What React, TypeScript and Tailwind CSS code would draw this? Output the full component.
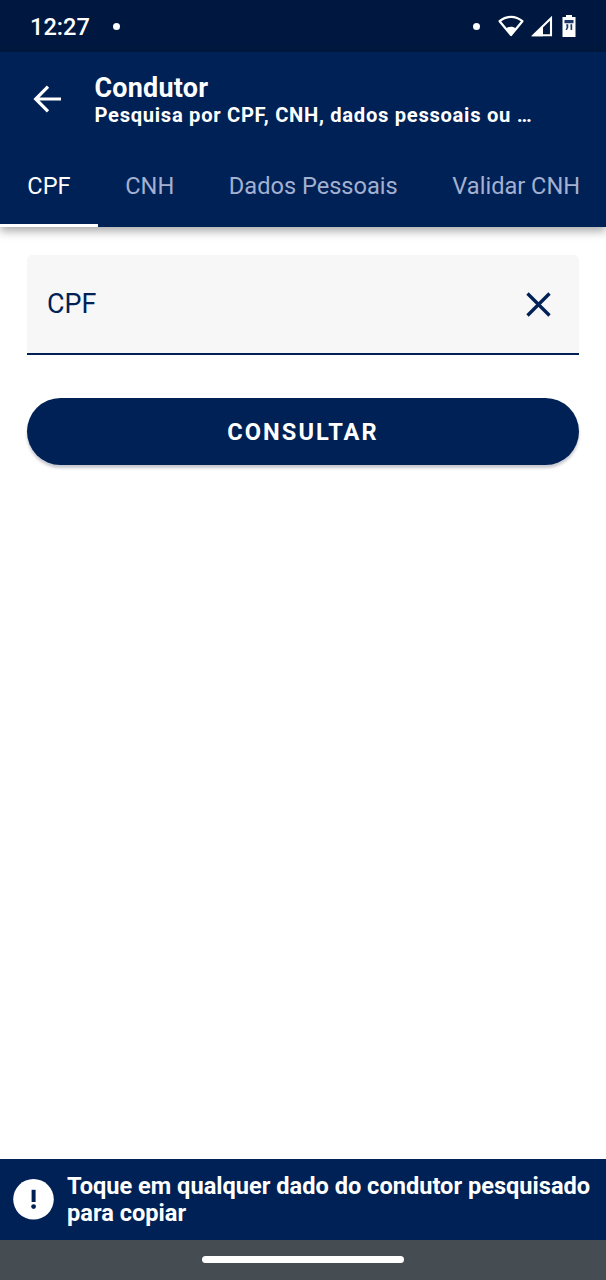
import type { ReactNode } from "react";

const TABS = ["CPF", "CNH", "Dados Pessoais", "Validar CNH"];

function StatusBar() {
  return (
    <div className="flex h-[52px] shrink-0 items-center bg-[#00183f] pl-[30px] pr-[29px] text-white">
      <span className="pt-[4px] text-[23.6px] font-medium leading-none">12:27</span>
      <span className="ml-[23px] size-[7px] rounded-full bg-white" />
      <span className="ml-auto mr-[18px] size-[7px] rounded-full bg-white" />
      <svg width="27" height="24" viewBox="0 0 27 24" fill="none">
        <path
          d="M1.6 7.2C8.4 1.3 17.6 1.3 24.4 7.2L13 21Z"
          stroke="white"
          strokeWidth="2.2"
          strokeLinejoin="round"
        />
        <path d="M8 14.6C11 12.2 15 12.2 18 14.6L13 21.8Z" fill="white" />
      </svg>
      <svg className="ml-[6px]" width="22" height="24" viewBox="0 0 22 24" fill="none">
        <path d="M2.5 21.3H20V4.2Z" stroke="white" strokeWidth="2.1" />
        <path d="M1 22.3L12 11.5V22.3Z" fill="white" />
      </svg>
      <svg className="ml-[9px]" width="15" height="24" viewBox="0 0 15 24" fill="none">
        <path d="M4 1H10V3H13.5V23H.5V3H4Z" fill="white" />
        <path
          d="M2.5 6H11.5V9.3H2.5ZM4.2 10.2H6.3V13.5L5 16H3.6L4.6 13.2ZM8.4 10.2H10.2V16H8.6Z"
          fill="#1d3766"
        />
      </svg>
    </div>
  );
}

function Tab({ active, children }: { active?: boolean; children: ReactNode }) {
  return (
    <button
      role="tab"
      aria-selected={active}
      className={`flex h-[81px] shrink-0 items-center whitespace-nowrap border-b-[3px] px-[27.3px] pt-[4px] text-[23.6px] leading-none ${
        active ? "border-white text-white" : "border-transparent text-[#a3b0cf]"
      }`}
    >
      {children}
    </button>
  );
}

function Header() {
  return (
    <header className="z-10 h-[175px] shrink-0 bg-[#002156] shadow-[0_4px_9px_rgba(0,0,0,0.35)]">
      <div className="flex h-[94px] items-center pl-[33px] text-white">
        <svg width="29" height="28" viewBox="0 0 29 28" fill="none" stroke="white" strokeWidth="3.2">
          <path d="M28 14H3M15 1.7L2.7 14L15 26.3" />
        </svg>
        <div className="ml-[32.5px] mt-[5px] font-bold">
          <h1 className="text-[26.9px] leading-[28px] tracking-[0.25px]">Condutor</h1>
          <p className="text-[20.2px] leading-[27px] tracking-[0.69px]">
            Pesquisa por CPF, CNH, dados pessoais ou …
          </p>
        </div>
      </div>
      <div role="tablist" className="flex overflow-hidden">
        {TABS.map((t, i) => (
          <Tab key={t} active={i === 0}>
            {t}
          </Tab>
        ))}
      </div>
    </header>
  );
}

export default function App() {
  return (
    <div className="flex h-[1280px] w-[606px] flex-col overflow-hidden bg-white font-[Roboto,sans-serif]">
      <StatusBar />
      <Header />

      <main className="flex flex-1 flex-col px-[27px] pt-[28px]">
        <div className="flex h-[100px] items-center justify-between rounded-t-[5px] border-b-2 border-[#002156] bg-[#f7f7f7] pl-[20px] pr-[28px] text-[#002156]">
          <span className="pt-px text-[26.9px] leading-none">CPF</span>
          <svg width="25" height="25" viewBox="0 0 25 25" stroke="#002156" strokeWidth="3.3">
            <path d="M1.5 1.5L23.5 23.5M23.5 1.5L1.5 23.5" />
          </svg>
        </div>
        <button className="mt-[43px] h-[67px] rounded-full bg-[#002156] pt-[2px] text-[23.6px] font-bold tracking-[2.05px] text-white shadow-[0_3px_3px_rgba(0,10,40,0.22)]">
          CONSULTAR
        </button>
      </main>

      <footer className="flex h-[81px] shrink-0 items-center bg-[#002156] pl-[13px] text-white">
        <svg width="41" height="41" viewBox="0 0 41 41">
          <circle cx="20.5" cy="20.3" r="20.3" fill="white" />
          <path d="M18.6 10.8H22.6V23H18.6Z" fill="#002156" />
          <circle cx="20.6" cy="27.6" r="2.4" fill="#002156" />
        </svg>
        <p className="ml-[13px] whitespace-nowrap text-[23.6px] font-bold leading-[27px]">
          Toque em qualquer dado do condutor pesquisado
          <br />
          para copiar
        </p>
      </footer>
      <div className="flex h-[40px] shrink-0 items-center justify-center bg-[#454d52] pb-px">
        <div className="h-[7px] w-[202px] rounded-full bg-white" />
      </div>
    </div>
  );
}
